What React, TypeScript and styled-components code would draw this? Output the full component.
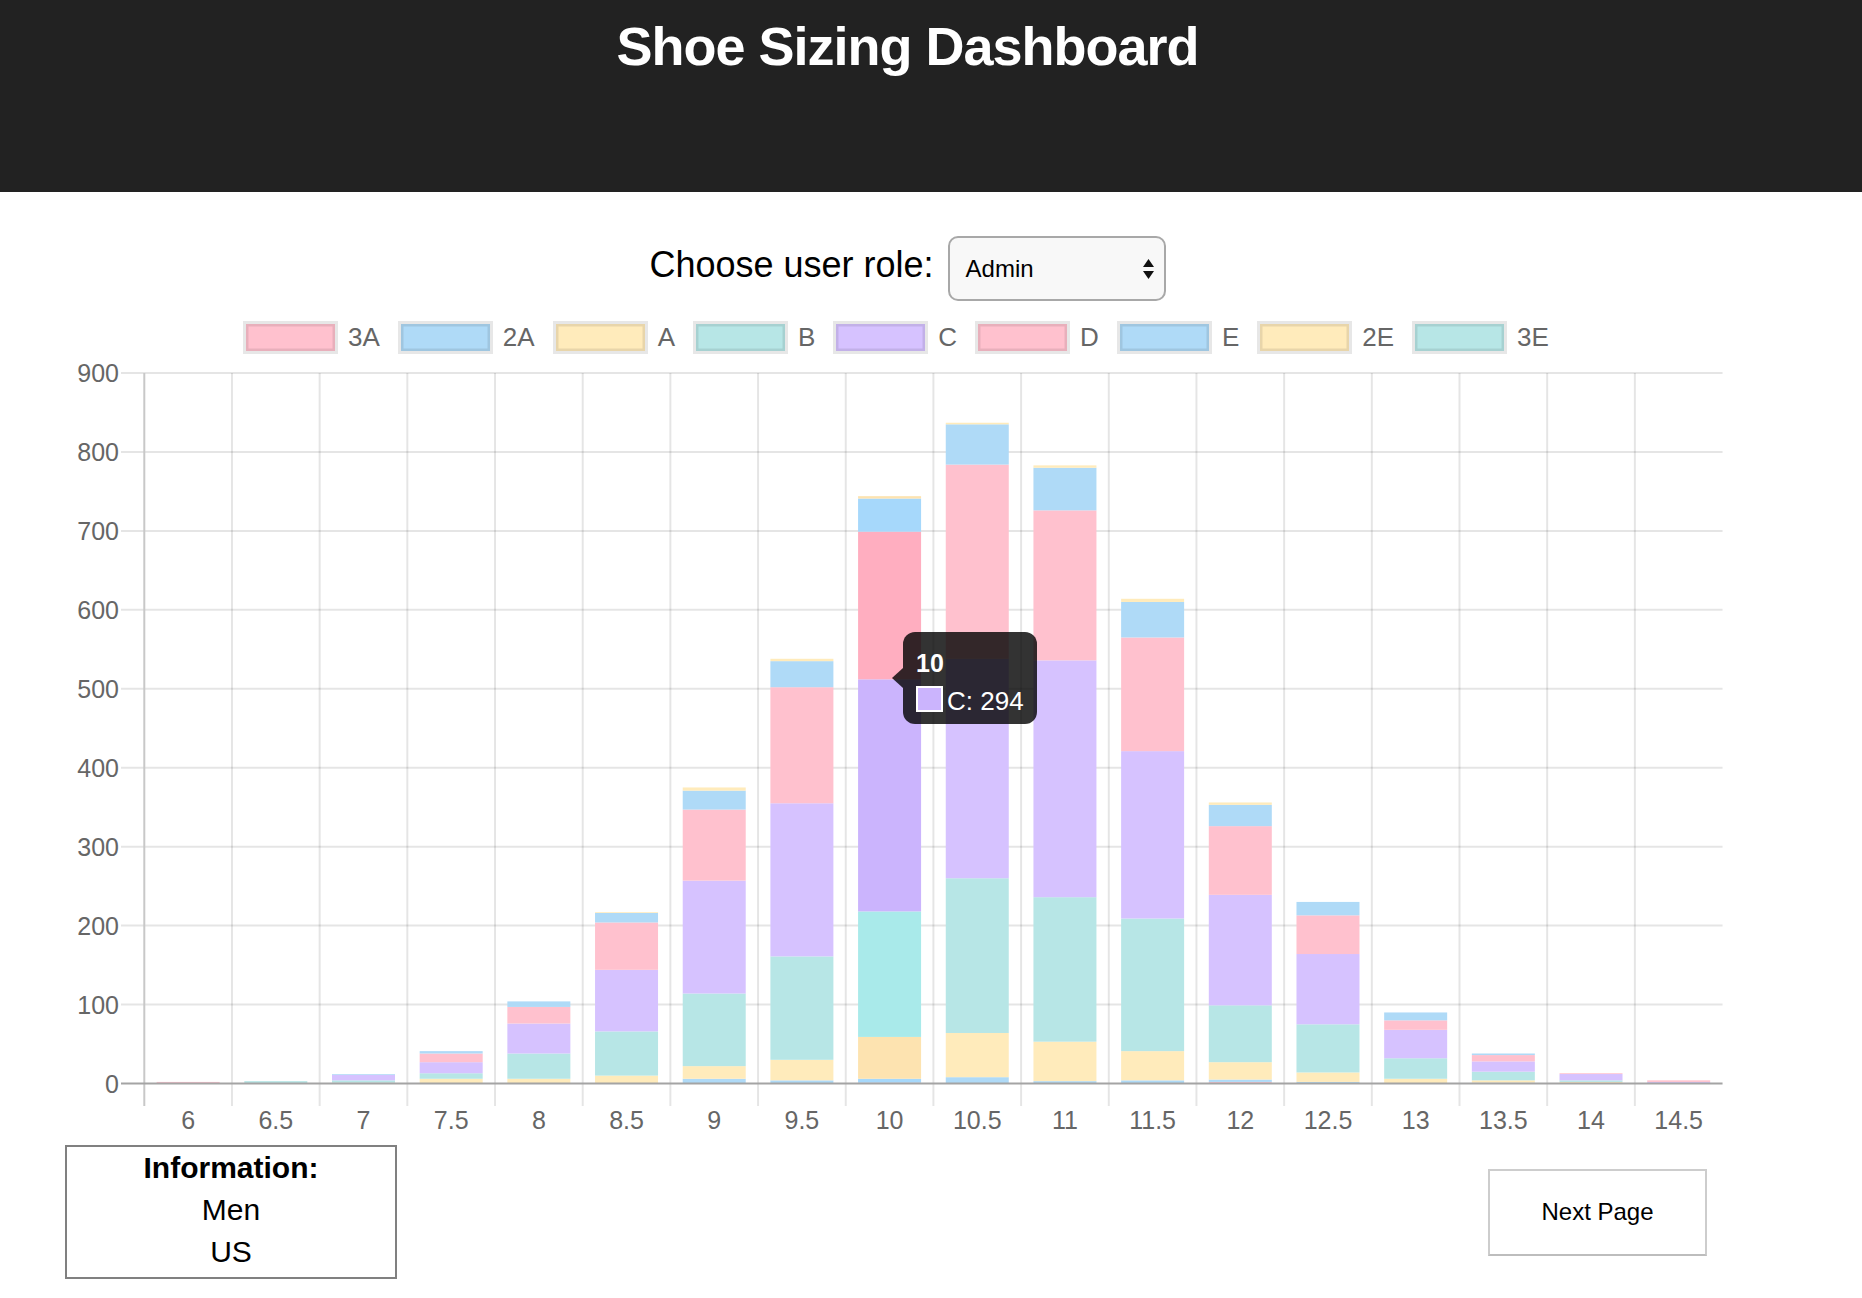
import React from "react";
import styled, { createGlobalStyle } from "styled-components";

const GlobalStyle = createGlobalStyle`
  html, body {
    margin: 0;
    padding: 0;
    background: #ffffff;
  }
  body {
    font-family: "Liberation Sans", Arial, Helvetica, sans-serif;
  }
  * {
    box-sizing: border-box;
  }
`;

const Page = styled.div`
  width: 1862px;
`;

const Header = styled.header`
  background: #222222;
  height: 192px;
  padding: 15px 47px 0 0;
`;

const Title = styled.h1`
  margin: 0;
  text-align: center;
  color: #ffffff;
  font-size: 54px;
  line-height: 62px;
  font-weight: 700;
  letter-spacing: -1px;
`;

const Main = styled.main`
  width: 1815px;
`;

const RoleRow = styled.div`
  display: flex;
  justify-content: center;
  align-items: baseline;
  gap: 14px;
  margin-top: 44px;
`;

const RoleLabel = styled.label`
  font-size: 36px;
  color: #000000;
`;

const SelectBox = styled.div`
  display: flex;
  align-items: center;
  justify-content: space-between;
  width: 218px;
  height: 65px;
  padding: 0 10px 0 16px;
  border: 2px solid #a8a8a8;
  border-radius: 10px;
  background: #f8f8f8;
  font-size: 24px;
  color: #000000;
`;

const LegendRow = styled.div`
  display: flex;
  align-items: center;
  gap: 18px;
  height: 33px;
  margin-top: 20px;
  padding-left: 243px;
`;

const LegendItem = styled.div`
  display: flex;
  align-items: center;
  gap: 10px;
  font-size: 26px;
  color: #666666;
`;

const Swatch = styled.span<{ $fill: string }>`
  display: block;
  width: 95px;
  height: 33px;
  background: ${(p) => p.$fill};
  border: 3px solid #e7e7e7;
  box-shadow: inset 0 0 0 2.5px rgba(0, 0, 0, 0.09);
`;

const ChartArea = styled.div`
  position: relative;
  width: 1815px;
  height: 786px;
`;

const ChartSvg = styled.svg`
  display: block;
`;

const GridLine = styled.line<{ $tone: "grid" | "axis" | "zero" }>`
  stroke: ${(p) =>
    p.$tone === "zero" ? "#a4a4a4" : p.$tone === "axis" ? "#c8c8c8" : "rgba(0,0,0,0.1)"};
  stroke-width: 2;
`;

const TickText = styled.text`
  font-family: "Liberation Sans", Arial, Helvetica, sans-serif;
  font-size: 25px;
  fill: #666666;
`;

const Segment = styled.rect<{ $fill: string }>`
  fill: ${(p) => p.$fill};
`;

const Tooltip = styled.div`
  position: absolute;
  left: 903px;
  top: 278px;
  width: 134px;
  height: 92px;
  padding: 16px 13px 8px;
  border-radius: 12px;
  background: rgba(0, 0, 0, 0.8);
  color: #ffffff;

  &::before {
    content: "";
    position: absolute;
    left: -11px;
    top: 36px;
    border-right: 11px solid rgba(0, 0, 0, 0.8);
    border-top: 10.5px solid transparent;
    border-bottom: 10.5px solid transparent;
  }
`;

const TooltipTitle = styled.div`
  font-size: 25px;
  line-height: 30px;
  font-weight: 700;
`;

const TooltipBody = styled.div`
  display: flex;
  align-items: center;
  gap: 4px;
  margin-top: 8px;
  font-size: 26px;
  line-height: 30px;
  white-space: nowrap;
`;

const TooltipSwatch = styled.span<{ $fill: string }>`
  display: block;
  width: 27px;
  height: 26px;
  margin-top: -5px;
  border: 2px solid #ffffff;
  background: ${(p) => p.$fill};
`;

const Footer = styled.div`
  display: flex;
  justify-content: space-between;
  align-items: center;
  margin-top: 5px;
  padding: 0 108px 0 65px;
`;

const InfoBox = styled.div`
  width: 332px;
  border: 2px solid #808080;
  padding: 0 0 4px;
  text-align: center;
  font-size: 30px;
  line-height: 42px;
  color: #000000;
`;

const InfoTitle = styled.div`
  font-weight: 700;
`;

const NextButton = styled.button`
  width: 219px;
  height: 87px;
  padding: 0;
  background: #ffffff;
  border: 2px solid #cdcdcd;
  border-bottom-color: #bdbdbd;
  font-family: inherit;
  font-size: 24px;
  color: #000000;
`;

const LABELS = ["6", "6.5", "7", "7.5", "8", "8.5", "9", "9.5", "10", "10.5", "11", "11.5", "12", "12.5", "13", "13.5", "14", "14.5"];
const SERIES = ["3A", "2A", "A", "B", "C", "D", "E", "2E", "3E"];
const BASE = ["#ffc1ce", "#afdaf7", "#ffebbb", "#b7e6e6", "#d6c2ff"];
const HOVER = ["#ffaec0", "#a6d8fb", "#fde3b0", "#a9eaea", "#cbb4fd"];

// rows: size; columns: 3A,2A,A,B,C,D,E,2E,3E
const DATA: number[][] = [
  [2, 0, 0, 0, 0, 0, 0, 0, 0],
  [0, 0, 0, 3, 0, 0, 0, 0, 0],
  [0, 0, 1, 3, 7, 0, 1, 0, 0],
  [0, 0, 6, 7, 14, 11, 3, 0, 0],
  [0, 0, 6, 32, 38, 21, 7, 0, 0],
  [0, 0, 10, 56, 78, 60, 12, 1, 0],
  [0, 6, 16, 92, 143, 90, 24, 4, 0],
  [0, 4, 26, 131, 194, 147, 33, 3, 0],
  [1, 5, 53, 159, 294, 187, 42, 3, 0],
  [0, 8, 56, 196, 278, 246, 51, 2, 0],
  [0, 3, 50, 183, 300, 190, 54, 3, 0],
  [0, 4, 37, 168, 212, 144, 45, 4, 0],
  [2, 3, 22, 72, 140, 87, 27, 3, 0],
  [0, 2, 12, 61, 89, 49, 17, 0, 0],
  [0, 0, 6, 26, 36, 12, 10, 0, 0],
  [0, 1, 3, 11, 13, 8, 2, 0, 0],
  [0, 0, 2, 2, 8, 1, 0, 0, 0],
  [0, 0, 0, 0, 2, 2, 0, 0, 0],
];

const HOVER_INDEX = 8;
const X0 = 144.3;
const CW = 87.68;
const XEND = X0 + CW * 18;
const PER_UNIT = 0.78944;
const ZERO_Y = 729.5;
const BAR_W = 63;
const yOf = (v: number) => ZERO_Y - v * PER_UNIT;

function ArrowsIcon() {
  return (
    <svg width="11" height="20" viewBox="0 0 11 20" aria-hidden="true">
      <polygon points="0,8 5.5,0 11,8" fill="#111" />
      <polygon points="0,12 11,12 5.5,20" fill="#111" />
    </svg>
  );
}

function BarChart() {
  const ticks = [0, 100, 200, 300, 400, 500, 600, 700, 800, 900];
  return (
    <ChartSvg width={1815} height={786} viewBox="0 0 1815 786">
      {ticks
        .filter((t) => t !== 0)
        .map((t) => (
          <GridLine key={`h${t}`} $tone="grid" x1={121} x2={XEND} y1={yOf(t)} y2={yOf(t)} />
        ))}
      {LABELS.map((_, i) => (
        <GridLine
          key={`v${i}`}
          $tone={i === 0 ? "axis" : "grid"}
          x1={X0 + i * CW}
          x2={X0 + i * CW}
          y1={yOf(900)}
          y2={752}
        />
      ))}
      {DATA.map((row, i) => {
        const cx = X0 + (i + 0.5) * CW;
        let cum = 0;
        return (
          <g key={`b${i}`}>
            {row.map((val, s) => {
              if (!val) return null;
              const top = yOf(cum + val);
              cum += val;
              const palette = i === HOVER_INDEX ? HOVER : BASE;
              return (
                <Segment
                  key={`s${s}`}
                  $fill={palette[s % 5]}
                  x={cx - BAR_W / 2}
                  width={BAR_W}
                  y={top}
                  height={val * PER_UNIT}
                />
              );
            })}
          </g>
        );
      })}
      <GridLine $tone="zero" x1={121} x2={XEND} y1={ZERO_Y} y2={ZERO_Y} />
      {ticks.map((t) => (
        <TickText key={`yl${t}`} x={119} y={yOf(t) + 9} textAnchor="end">
          {t}
        </TickText>
      ))}
      {LABELS.map((l, i) => (
        <TickText key={`xl${l}`} x={X0 + (i + 0.5) * CW} y={775.3} textAnchor="middle">
          {l}
        </TickText>
      ))}
    </ChartSvg>
  );
}

export default function App() {
  return (
    <Page>
      <GlobalStyle />
      <Header>
        <Title>Shoe Sizing Dashboard</Title>
      </Header>
      <Main>
        <RoleRow>
          <RoleLabel>Choose user role:</RoleLabel>
          <SelectBox role="combobox" aria-label="user role">
            <span>Admin</span>
            <ArrowsIcon />
          </SelectBox>
        </RoleRow>
        <LegendRow>
          {SERIES.map((name, i) => (
            <LegendItem key={name}>
              <Swatch $fill={BASE[i % 5]} />
              <span>{name}</span>
            </LegendItem>
          ))}
        </LegendRow>
        <ChartArea>
          <BarChart />
          <Tooltip>
            <TooltipTitle>10</TooltipTitle>
            <TooltipBody>
              <TooltipSwatch $fill="#cbb4fd" />
              <span>C: 294</span>
            </TooltipBody>
          </Tooltip>
        </ChartArea>
        <Footer>
          <InfoBox>
            <InfoTitle>Information:</InfoTitle>
            <div>Men</div>
            <div>US</div>
          </InfoBox>
          <NextButton type="button">Next Page</NextButton>
        </Footer>
      </Main>
    </Page>
  );
}
